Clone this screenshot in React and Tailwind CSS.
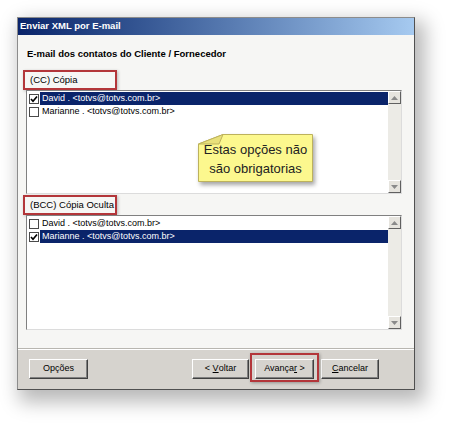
import React from 'react';

function Check({ checked }) {
  return (
    <span className="flex h-[10px] w-[10px] shrink-0 items-center justify-center border border-[#4a4a4a] bg-white">
      {checked && (
        <svg viewBox="0 0 8 8" className="h-[8px] w-[8px]">
          <path d="M1 4 L3 6.2 L7 1.5" fill="none" stroke="#000" strokeWidth="1.7" />
        </svg>
      )}
    </span>
  );
}

function Row({ name, checked, selected }) {
  return (
    <div className="flex h-[13px] items-center">
      <div className="flex w-[13px] shrink-0 justify-end pr-[1px]">
        <Check checked={checked} />
      </div>
      <div
        className={`flex h-full flex-1 items-center whitespace-nowrap pl-[2px] ${
          selected ? 'bg-[#0a246a] text-white' : 'text-black'
        }`}
      >
        {name} . &lt;totvs@totvs.com.br&gt;
      </div>
    </div>
  );
}

function Arrow({ up }) {
  return (
    <div className="flex h-[13px] w-[13px] items-center justify-center border border-t-white border-l-white border-b-[#606060] border-r-[#606060] bg-[#e6e4de]">
      <svg viewBox="0 0 7 4" className="h-[4px] w-[7px]">
        <path d={up ? 'M0 4 L3.5 0 L7 4 Z' : 'M0 0 L3.5 4 L7 0 Z'} fill="#8a8a8a" />
      </svg>
    </div>
  );
}

function ScrollBar() {
  return (
    <div className="flex w-[13px] shrink-0 flex-col justify-between bg-[#ecebe6]">
      <Arrow up />
      <Arrow />
    </div>
  );
}

function ListBox({ className, children, overlay }) {
  return (
    <div
      className={`relative ml-[3px] flex border border-[#808080] border-b-[#dcdcdc] border-r-[#dcdcdc] bg-white ${className}`}
    >
      <div className="flex-1 pt-[1px]">{children}</div>
      <ScrollBar />
      {overlay}
    </div>
  );
}

function RedLabel({ children }) {
  return (
    <div className="flex h-[20px] w-[94px] items-center whitespace-nowrap border-2 border-[#b3363a] pl-[5px] text-[9.5px] shadow-[1px_1px_3px_rgba(0,0,0,0.25)]">
      {children}
    </div>
  );
}

function Button({ width, children }) {
  return (
    <div
      className={`flex h-[20px] items-center justify-center whitespace-nowrap border border-t-white border-l-white border-b-[#404040] border-r-[#404040] bg-[#d6d3ce] text-black shadow-[inset_-1px_-1px_0_#808080] ${width}`}
    >
      {children}
    </div>
  );
}

function Note() {
  return (
    <div className="absolute left-[171px] top-[43px] h-[48px] w-[115px]">
      <svg
        viewBox="0 0 115 48"
        className="absolute inset-0 h-full w-full overflow-visible drop-shadow-[2px_3px_2px_rgba(0,0,0,0.35)]"
      >
        <polygon points="25,0.5 114.5,0.5 114.5,47.5 0.5,47.5 0.5,10" fill="#fcf88e" stroke="#bdb25c" />
        <polygon points="0.5,10 25,0.5 21,10" fill="#e8e07a" stroke="#bdb25c" />
      </svg>
      <div className="relative flex h-full flex-col items-center justify-center pt-[1px] font-['Liberation_Sans',Arial,sans-serif] text-[13px] leading-[19px] text-[#222]">
        <span>Estas opções não</span>
        <span>são obrigatorias</span>
      </div>
    </div>
  );
}

export default function App() {
  return (
    <div className="h-[438px] w-[464px] overflow-hidden bg-white pl-[17px] pt-[17px] font-['Liberation_Sans',Arial,sans-serif] text-[9px] text-black">
      <div className="flex w-[398px] flex-col border border-[#8c8c8c] border-r-[#505050] border-b-[#505050] bg-[#f6f6f4] shadow-[6px_8px_18px_4px_rgba(0,0,0,0.28)]">
        {/* Title bar */}
        <div className="flex h-[17px] items-center bg-linear-to-r from-[#0a246a] to-[#a6caf0] pl-[2px] text-[9.5px] font-bold text-white">
          Enviar XML por E-mail
        </div>

        {/* Content */}
        <div className="flex flex-col pl-[5px] pr-[12px] pt-[12px]">
          <div className="ml-[4px] h-[13px] text-[9.5px] font-bold leading-[13px]">
            E-mail dos contatos do Cliente / Fornecedor
          </div>

          <div className="mt-[10px]">
            <RedLabel>(CC) Cópia</RedLabel>
          </div>
          <ListBox className="h-[104px]" overlay={<Note />}>
            <Row name="David" checked selected />
            <Row name="Marianne" />
          </ListBox>

          <div className="mt-[1px]">
            <RedLabel>(BCC) Cópia Oculta</RedLabel>
          </div>
          <ListBox className="h-[115px]">
            <Row name="David" />
            <Row name="Marianne" checked selected />
          </ListBox>
        </div>

        {/* Button panel */}
        <div className="mt-[18px] flex border-t border-[#b8b6b0] bg-[#d6d3ce] pb-[10px] pl-[11px] pr-[35px] pt-[10px] shadow-[inset_0_1px_0_#ffffff]">
          <Button width="w-[59px]">Opções</Button>
          <div className="flex-1" />
          <div className="flex gap-[6px]">
            <Button width="w-[57px]">
              &lt;&nbsp;<span className="underline">V</span>oltar
            </Button>
            <div className="relative">
              <Button width="w-[59px]">
                Avança<span className="underline">r</span>&nbsp;&gt;
              </Button>
              <div className="absolute -bottom-[3px] -left-[5px] -right-[5px] -top-[6px] border-2 border-[#b3363a] shadow-[1px_1px_3px_rgba(0,0,0,0.3)]" />
            </div>
            <div className="ml-[1px]">
              <Button width="w-[58px]">
                <span className="underline">C</span>ancelar
              </Button>
            </div>
          </div>
        </div>
      </div>
    </div>
  );
}
